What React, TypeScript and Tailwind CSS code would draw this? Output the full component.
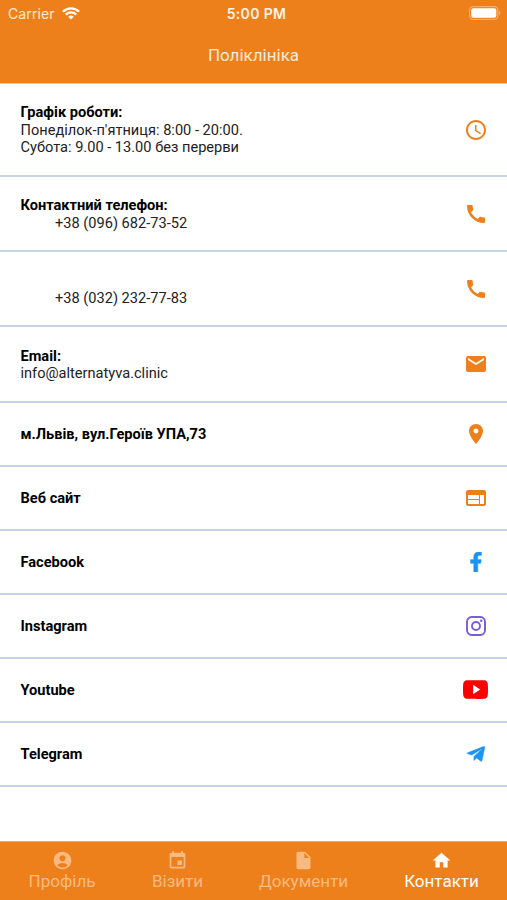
import {
    MdAccessTime,
    MdAccountCircle,
    MdCall,
    MdEmail,
    MdEvent,
    MdHome,
    MdInsertDriveFile,
    MdLocationOn,
    MdWeb,
} from "react-icons/md"
import { FaFacebookF, FaTelegramPlane } from "react-icons/fa"
import { IoLogoYoutube } from "react-icons/io5"

function InstagramIcon() {
    return (
        <svg width="24" height="24" viewBox="0 0 24 24" fill="none" stroke="currentColor" strokeWidth="1.9">
            <rect x="3" y="3" width="18" height="18" rx="4.7" />
            <circle cx="12" cy="12" r="4" />
            <circle cx="17.25" cy="6.75" r="1.25" fill="currentColor" stroke="none" />
        </svg>
    )
}

const contacts = [
    {
        title: "Графік роботи:",
        lines: ["Понеділок-п'ятниця: 8:00 - 20:00.", "Субота: 9.00 - 13.00 без перерви"],
        icon: <MdAccessTime size={24} />,
        row: "h-[93px]",
        color: "text-[#ee801b] pt-px",
    },
    {
        title: "Контактний телефон:",
        lines: ["+38 (096) 682-73-52"],
        indent: true,
        icon: <MdCall size={24} />,
        row: "h-[75px]",
        color: "text-[#ee801b] pt-px",
    },
    {
        title: "\u00a0",
        lines: ["+38 (032) 232-77-83"],
        indent: true,
        icon: <MdCall size={24} />,
        row: "h-[75px]",
        color: "text-[#ee801b] pt-px",
    },
    {
        title: "Email:",
        lines: ["info@alternatyva.clinic"],
        icon: <MdEmail size={24} />,
        row: "h-[76px]",
        color: "text-[#ee801b] pb-px",
    },
    { title: "м.Львів, вул.Героїв УПА,73", icon: <MdLocationOn size={24} />, row: "h-16", color: "text-[#ee801b] pb-px" },
    { title: "Веб сайт", icon: <MdWeb size={24} />, row: "h-16", color: "text-[#ee801b] pb-px" },
    { title: "Facebook", icon: <FaFacebookF size={20} strokeWidth={16} />, row: "h-16", color: "text-[#1d94f2] pb-px" },
    { title: "Instagram", icon: <InstagramIcon />, row: "h-16", color: "text-[#7a5bd8] pb-px" },
    { title: "Youtube", icon: <IoLogoYoutube size={25} />, row: "h-16", color: "text-[#fe0000] pb-px" },
    { title: "Telegram", icon: <FaTelegramPlane size={20} strokeWidth={14} />, row: "h-16", color: "text-[#1d94f2] pb-px" },
]

const tabs = [
    { label: "Профіль", icon: <MdAccountCircle size={21} />, width: "w-[124px]" },
    { label: "Візити", icon: <MdEvent size={21} />, width: "w-[107px]" },
    { label: "Документи", icon: <MdInsertDriveFile size={21} />, width: "w-[145px]" },
    { label: "Контакти", icon: <MdHome size={21} />, width: "w-[131px]", active: true },
]

function StatusBar() {
    return (
        <div className="grid h-[27px] grid-cols-3 items-center pr-1.5 pl-2 font-['Inter','Liberation_Sans',sans-serif] text-[14px]">
            <div className="flex items-center gap-[7px] text-[#fde9d3]">
                <span className="tracking-[0.1px]">Carrier</span>
                <svg className="mb-px" width="18" height="13" viewBox="0 0 18 13" fill="none" stroke="#fff" strokeWidth="2.3">
                    <path d="M1 4.7a11.3 11.3 0 0 1 16 0" />
                    <path d="M3.8 7.6a7.4 7.4 0 0 1 10.4 0" />
                    <path d="M9 12.6 6.2 9.8a4 4 0 0 1 5.6 0z" fill="#fff" stroke="none" />
                </svg>
            </div>
            <span className="pl-1 text-center font-semibold tracking-[0.35px] text-[#fff3e6]">5:00 PM</span>
            <svg className="mb-px justify-self-end" width="32" height="14" viewBox="0 0 32 14">
                <rect x="0.6" y="0.6" width="28.3" height="12.8" rx="3.6" fill="none" stroke="#f5b070" strokeWidth="1.1" />
                <rect x="2.2" y="2.2" width="25.1" height="9.6" rx="2" fill="#fff" />
                <path d="M30.2 4.8c1.7.8 1.7 3.6 0 4.4z" fill="#f5b070" />
            </svg>
        </div>
    )
}

export default function App() {
    return (
        <div className="flex h-[900px] w-[507px] flex-col overflow-hidden bg-white font-['Roboto','Liberation_Sans',sans-serif]">
            <header className="h-[84px] shrink-0 border-b border-[#f9c896] bg-[#ee801b]">
                <StatusBar />
                <h1 className="h-[56px] text-center text-[17px] leading-[56px] text-[#fdebd8]">Поліклініка</h1>
            </header>
            <main className="flex-1">
                {contacts.map(({ title, lines, indent, icon, row, color }, index) => (
                    <div
                        key={index}
                        className={`flex items-center justify-between border-b-2 border-[#c6d4e1] pr-[15px] pl-[20.5px] text-[14.6px] leading-[17.4px] ${row}`}
                    >
                        <div className="pt-[2px]">
                            <p className="font-bold text-black">{title}</p>
                            {lines?.map((line) => (
                                <p key={line} className={`text-[#222] ${indent ? "pl-[34.5px]" : ""}`}>
                                    {line}
                                </p>
                            ))}
                        </div>
                        <div className={`flex w-[33px] justify-center ${color}`}>{icon}</div>
                    </div>
                ))}
            </main>
            <nav className="flex h-[59px] shrink-0 border-t border-[#f3a764] bg-[#ee801b]">
                {tabs.map(({ label, icon, width, active }) => (
                    <div
                        key={label}
                        className={`flex flex-col items-center pt-2 text-[17px] leading-[21px] ${width} ${active ? "text-white" : "text-[#f8ba80]"}`}
                    >
                        {icon}
                        <span>{label}</span>
                    </div>
                ))}
            </nav>
        </div>
    )
}
